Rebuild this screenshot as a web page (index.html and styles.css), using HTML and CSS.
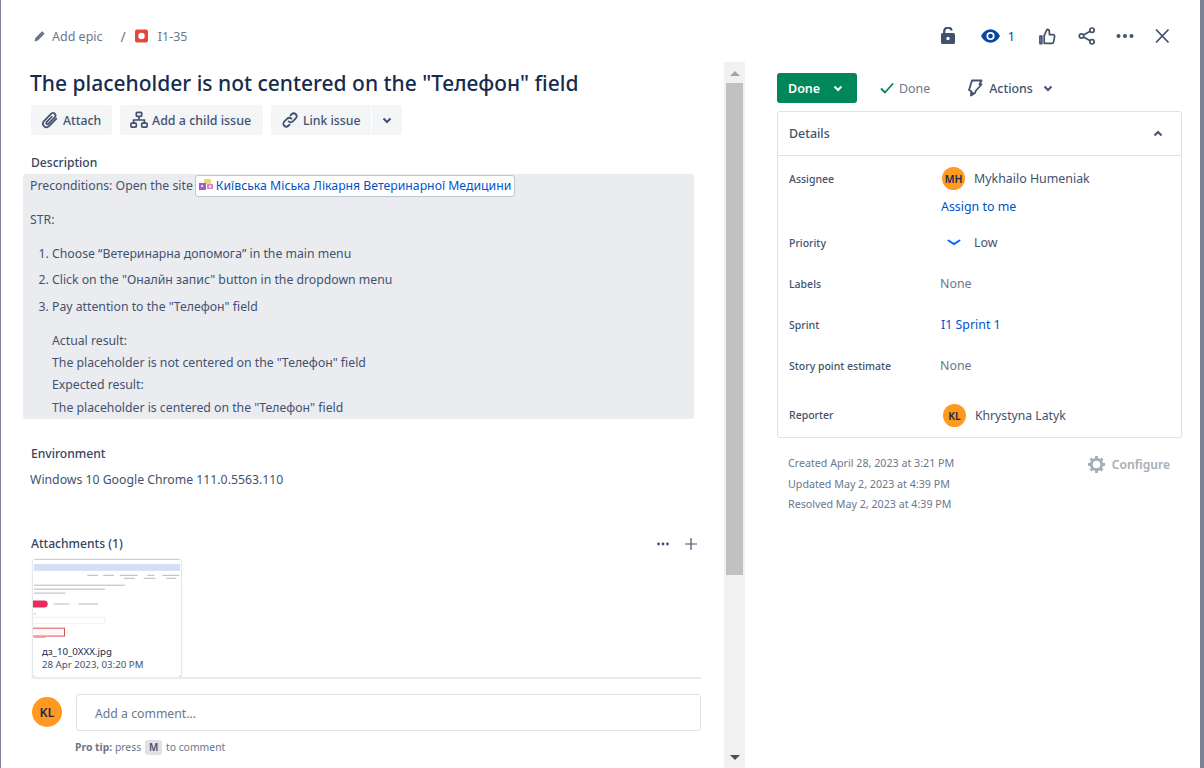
FILE: index.html
```html
<!DOCTYPE html>
<html lang="en">
<head>
<meta charset="utf-8">
<title>I1-35</title>
<link rel="stylesheet" href="styles.css">
</head>
<body>
<div class="modal">
  <header class="topbar">
    <nav class="crumbs">
      <svg class="ic-pencil" width="14" height="14" viewBox="0 0 14 14"><path fill="#6b778c" d="M1.500 12.500l.8-3.400 6-6.200c.5-.5 1.200-.5 1.700 0l.9.900c.5.5.5 1.200 0 1.700l-6 6.100z"/></svg>
      <span class="crumb-text">Add epic</span>
      <span class="crumb-sep">/</span>
      <svg class="ic-bug" width="14" height="14" viewBox="0 0 14 14"><rect width="13" height="13" y=".5" rx="2" fill="#e5493a"/><circle cx="6.500" cy="7" r="3.200" fill="#fff"/></svg>
      <span class="crumb-key">I1-35</span>
    </nav>
    <div class="top-actions">
      <svg class="ta ta-lock" width="14" height="17" viewBox="0 0 14 17"><path fill="none" stroke="#42526e" stroke-width="2.200" d="M3.200 7V4.500a3.800 3.800 0 0 1 7.500-.9"/><rect x="0" y="6" width="14" height="11" rx="1.500" fill="#42526e"/><circle cx="7" cy="11.500" r="1.700" fill="#fff"/></svg>
      <span class="watch">
        <svg width="19" height="14" viewBox="0 0 20 14"><path fill="#0747a6" d="M0 7C2.500 2.300 6 0 10 0s7.500 2.300 10 7c-2.500 4.700-6 7-10 7S2.500 11.700 0 7z"/><circle cx="10" cy="7" r="4.300" fill="#fff"/><circle cx="10" cy="7" r="2.500" fill="#0747a6"/></svg>
        <span class="watch-n">1</span>
      </span>
      <svg class="ta ta-thumb" width="17" height="17" viewBox="0 0 18 18"><path fill="none" stroke="#42526e" stroke-width="1.800" stroke-linejoin="round" d="M5.500 8l3-6.500c1.500 0 2.500 1 2.500 2.500v3h4c1 0 1.700.8 1.500 1.800l-1 6c-.2.900-.8 1.400-1.700 1.400H5.500zM1 8.500h2V16.500H1z"/></svg>
      <svg class="ta ta-share" width="18" height="18" viewBox="0 0 18 18"><g fill="none" stroke="#42526e" stroke-width="1.700"><circle cx="3.500" cy="9" r="2.200"/><circle cx="14" cy="3.200" r="2.200"/><circle cx="14" cy="14.800" r="2.200"/><path d="M5.500 8l6.600-3.700M5.500 10l6.600 3.700"/></g></svg>
      <svg class="ta ta-more" width="18" height="6" viewBox="0 0 18 6"><circle cx="2.500" cy="3" r="2" fill="#42526e"/><circle cx="9" cy="3" r="2" fill="#42526e"/><circle cx="15.500" cy="3" r="2" fill="#42526e"/></svg>
      <svg class="ta ta-close" width="16" height="16" viewBox="0 0 16 16"><path stroke="#42526e" stroke-width="1.800" d="M2 1.500l12.500 13M14.500 1.500L2 14.500"/></svg>
    </div>
  </header>

  <div class="columns">
    <main class="main">
      <div class="content">
        <h1 class="title">The placeholder is not centered on the "Телефон" field</h1>
        <div class="btn-row">
          <button class="btn btn-attach">
            <svg width="20" height="20" viewBox="0 0 22 22"><path fill="none" stroke="#42526e" stroke-width="1.900" stroke-linecap="round" d="M18 9.500l-7.800 8c-1.800 1.800-4.200 1.800-5.800.2s-1.500-4 .2-5.800l7.500-7.700c1.200-1.200 3-1.200 4.100-.1s1.100 2.900 0 4.100l-7 7.100c-.6.600-1.500.6-2 .1s-.5-1.400 0-2l5.800-6"/></svg>Attach
          </button>
          <button class="btn btn-child">
            <svg width="18" height="18" viewBox="0 0 20 20"><g fill="none" stroke="#42526e" stroke-width="1.900"><rect x="7" y="1.500" width="6" height="4.500" rx="1"/><rect x="1" y="13.500" width="6" height="4.500" rx="1"/><rect x="13" y="13.500" width="6" height="4.500" rx="1"/><path d="M10 6v4M4 13.500V10h12v3.500"/></g></svg>Add a child issue
          </button>
          <div class="btn-group">
            <button class="btn btn-link">
              <svg width="18" height="18" viewBox="0 0 20 20"><g fill="none" stroke="#42526e" stroke-width="2" stroke-linecap="round"><path d="M8.500 11.500a3.200 3.200 0 0 0 4.600 0l3.300-3.300a3.200 3.200 0 0 0-4.600-4.600l-1.300 1.300"/><path d="M11.500 8.500a3.200 3.200 0 0 0-4.600 0l-3.300 3.300a3.200 3.200 0 0 0 4.600 4.600l1.300-1.300"/></g></svg>Link issue
            </button>
            <button class="btn btn-caret">
              <svg width="10" height="7" viewBox="0 0 10 7"><path fill="none" stroke="#42526e" stroke-width="2" d="M1.500 1.500L5 5l3.500-3.500"/></svg>
            </button>
          </div>
        </div>

        <h2 class="section-label label-desc">Description</h2>
        <div class="desc">
          <p class="desc-first">Preconditions: Open the site <a class="smart-link"><svg width="14" height="14" viewBox="0 0 14 14"><rect x="5" y="0" width="7" height="5" fill="#e8d96a"/><rect x="0" y="4" width="7" height="7" fill="#a05fc8"/><rect x="8" y="5" width="6" height="5" fill="#d483c4"/><rect x="2" y="6" width="2" height="2" fill="#e9d7f2"/><rect x="10" y="6.500" width="2" height="2" fill="#fff"/></svg> Київська Міська Лікарня Ветеринарної Медицини</a></p>
          <p class="desc-str">STR:</p>
          <ol class="steps">
            <li>Choose “Ветеринарна допомога” in the main menu</li>
            <li>Click on the "Оналйн запис" button in the dropdown menu</li>
            <li>Pay attention to the "Телефон" field</li>
          </ol>
          <div class="results">
            <p>Actual result:</p>
            <p>The placeholder is not centered on the "Телефон" field</p>
            <p>Expected result:</p>
            <p>The placeholder is centered on the "Телефон" field</p>
          </div>
        </div>

        <h2 class="section-label label-env">Environment</h2>
        <p class="env">Windows 10 Google Chrome 111.0.5563.110</p>

        <div class="att-head">
          <h2 class="section-label">Attachments (1)</h2>
          <div class="att-tools">
            <svg width="12" height="4" viewBox="0 0 12 4"><circle cx="1.500" cy="2" r="1.400" fill="#42526e"/><circle cx="6" cy="2" r="1.400" fill="#42526e"/><circle cx="10.500" cy="2" r="1.400" fill="#42526e"/></svg>
            <svg width="12" height="12" viewBox="0 0 12 12"><path stroke="#42526e" stroke-width="1.200" d="M6 0v12M0 6h12"/></svg>
          </div>
        </div>
        <div class="att-card">
          <svg class="thumb" width="148" height="83" viewBox="0 0 148 83">
            <rect width="148" height="83" fill="#fff"/>
            <rect y="4" width="148" height="7" fill="#d3dff5"/>
            <g fill="#9fa3a8" opacity=".75">
              <rect x="54" y="15" width="11" height="1"/><rect x="70" y="15" width="11" height="1"/><rect x="87" y="15" width="18" height="1"/><rect x="91" y="18" width="11" height="1"/><rect x="115" y="15" width="7" height="1"/><rect x="111" y="18" width="12" height="1"/><rect x="130" y="15" width="17" height="1"/><rect x="134" y="18" width="10" height="1"/>
              <rect y="25" width="92" height="1"/><rect y="29" width="72" height="1"/><rect y="33" width="32" height="1"/>
              <rect x="20" y="44" width="16" height="1"/><rect x="45" y="44" width="20" height="1"/><rect y="54" width="2" height="1"/><rect y="78" width="12" height="1"/>
            </g>
            <rect x="-8" y="41" width="22" height="7" rx="3.500" fill="#e62e5c"/>
            <rect x="-2" y="58" width="74" height="6" rx="2" fill="none" stroke="#eeeeee"/>
            <rect x="-2" y="69" width="33" height="8" fill="#fdf7f7" stroke="#d9534f"/>
          </svg>
          <p class="att-name">дз_10_0XXX.jpg</p>
          <p class="att-date">28 Apr 2023, 03:20 PM</p>
        </div>
        <div class="comment-rule"></div>
        <div class="comment">
          <span class="avatar avatar-lg">KL</span>
          <div class="comment-body">
            <div class="comment-input">Add a comment...</div>
            <p class="tip"><b>Pro tip:</b> press <kbd>M</kbd> to comment</p>
          </div>
        </div>
      </div>
      <div class="scrollbar">
        <span class="arrow-up"></span>
        <div class="thumbbar"></div>
        <span class="arrow-down"></span>
      </div>
    </main>

    <aside class="side">
      <div class="status-row">
        <button class="status-btn">Done<svg width="10" height="7" viewBox="0 0 10 7"><path fill="none" stroke="#fff" stroke-width="2" d="M1.500 1.500L5 5l3.500-3.500"/></svg></button>
        <span class="resolution"><svg width="14" height="12" viewBox="0 0 14 12"><path fill="none" stroke="#00875a" stroke-width="1.800" d="M1 6.500L5 10.500 13 1.500"/></svg>Done</span>
        <span class="actions"><svg width="16" height="18" viewBox="0 0 16 18"><path fill="none" stroke="#42526e" stroke-width="1.800" stroke-linejoin="round" d="M5 1.500h9.500l-2 4h2L9 11.500 8 14 4 16.500 4.500 12.500 2 11z"/><path fill="#42526e" d="M3.500 13h3l-.5 2.500-2.500 1.500z"/></svg>Actions<svg class="act-caret" width="10" height="7" viewBox="0 0 10 7"><path fill="none" stroke="#42526e" stroke-width="2" d="M1.500 1.500L5 5l3.500-3.500"/></svg></span>
      </div>

      <section class="details">
        <div class="details-head">
          <span>Details</span>
          <svg width="10" height="7" viewBox="0 0 10 7"><path fill="none" stroke="#42526e" stroke-width="2" d="M1.500 5.500L5 2l3.500 3.500"/></svg>
        </div>
        <div class="details-body">
          <div class="row row-assignee">
            <span class="row-label">Assignee</span>
            <div class="row-val">
              <div class="person"><span class="avatar">MH</span>Mykhailo Humeniak</div>
              <a class="assign">Assign to me</a>
            </div>
          </div>
          <div class="row row-priority">
            <span class="row-label">Priority</span>
            <div class="row-val priority"><svg width="14" height="8" viewBox="0 0 14 8"><path fill="none" stroke="#0065ff" stroke-width="2" stroke-linecap="round" d="M1.500 1.500L7 5l5.500-3.500"/></svg>Low</div>
          </div>
          <div class="row row-labels">
            <span class="row-label">Labels</span>
            <div class="row-val none">None</div>
          </div>
          <div class="row row-sprint">
            <span class="row-label">Sprint</span>
            <a class="row-val sprint">I1 Sprint 1</a>
          </div>
          <div class="row row-points">
            <span class="row-label">Story point estimate</span>
            <div class="row-val none">None</div>
          </div>
          <div class="row row-reporter">
            <span class="row-label">Reporter</span>
            <div class="row-val"><div class="person person-rep"><span class="avatar">KL</span>Khrystyna Latyk</div></div>
          </div>
        </div>
      </section>

      <div class="meta">
        <div class="dates">
          <p>Created April 28, 2023 at 3:21 PM</p>
          <p>Updated May 2, 2023 at 4:39 PM</p>
          <p>Resolved May 2, 2023 at 4:39 PM</p>
        </div>
        <span class="configure"><svg width="17" height="17" viewBox="0 0 18 18"><circle cx="9" cy="9" r="5.500" fill="none" stroke="#a5adba" stroke-width="3"/><path stroke="#a5adba" stroke-width="3" d="M9 0v3.500M9 14.500V18M0 9h3.500M14.500 9H18M2.700 2.700l2.400 2.400M12.900 12.900l2.400 2.400M2.700 15.300l2.400-2.400M12.900 5.100l2.400-2.400"/></svg>Configure</span>
      </div>
    </aside>
  </div>
</div>
</body>
</html>
```
FILE: styles.css
```css
* { box-sizing: border-box; }
html, body { margin: 0; padding: 0; height: 768px; overflow: hidden; }
body {
  background: #7a8294;
  font-family: "Noto Sans", sans-serif;
  font-size: 12.250px;
  color: #172b4d;
  padding-left: 1px;
  padding-right: 4px;
}
p, h1, h2, ol { margin: 0; padding: 0; }
.modal { background: #fff; height: 768px; display: flex; flex-direction: column; }

.topbar { height: 62px; flex: none; display: flex; justify-content: space-between; align-items: center; padding: 10px 30px 0 32px; }
.crumbs { display: flex; align-items: center; color: #6b778c; font-size: 12.500px; }
.crumb-text { margin-left: 5px; }
.crumb-sep { margin: 0 9px 0 18px; font-size: 14px; }
.crumb-key { margin-left: 9px; }
.top-actions { display: flex; align-items: center; }
.ta { display: block; }
.ta-lock { margin-right: 26px; margin-top: -1px; }
.watch { display: flex; align-items: center; margin-right: 24px; }
.watch-n { margin-left: 8px; color: #0747a6; font-size: 12.500px; }
.ta-thumb { margin-right: 22px; }
.ta-share { margin-right: 20px; }
.ta-more { margin-right: 20px; }

.columns { flex: 1; min-height: 0; display: flex; }
.main { width: 744px; flex: none; display: flex; }
.content { width: 723px; flex: none; padding-left: 29px; padding-right: 23px; height: 706px; overflow: hidden; }

.title { font-size: 21px; font-weight: 500; line-height: 30px; margin-top: 6px; color: #172b4d; }
.btn-row { display: flex; gap: 8px; margin: 7px 0 0 1px; }
.btn { height: 30px; border: 0; background: #f4f5f7; color: #42526e; font: 500 12.250px "Noto Sans", sans-serif; display: flex; align-items: center; gap: 4px; border-radius: 3px; padding: 0 0 0 10px; white-space: nowrap; }
.btn-attach { width: 81px; padding-left: 9px; gap: 3px; }
.btn-child { width: 143px; font-size: 12.450px; }
.btn-group { display: flex; gap: 1px; }
.btn-link { width: 100px; border-radius: 3px 0 0 3px; }
.btn-caret { width: 30px; border-radius: 0 3px 3px 0; padding: 0 10px; }

.section-label { font-size: 12.100px; font-weight: 500; color: #344563; line-height: 18px; margin-left: 1px; }
.label-desc { margin-top: 19px; }
.desc { margin: 2px 7px 0 -7px; padding: 0 7px; height: 245px; background: #ebecf0; border-radius: 3px; color: #42526e; line-height: 22px; }
.desc-first { display: flex; align-items: center; height: 23px; white-space: nowrap; }
.smart-link { display: flex; align-items: center; gap: 3px; height: 22px; margin-left: 2px; padding: 0 3px; background: #fff; border: 1px solid #c1c7d0; border-radius: 3px; color: #0052cc; }
.desc-str { margin-top: 13px; line-height: 20px; }
.steps { margin-top: 14px; padding-left: 22px; }
.steps li { line-height: 20px; margin-bottom: 6.400px; padding-left: 0; }
.results { margin-top: 13px; padding-left: 22px; }
.results p { line-height: 22.300px; }

.label-env { margin-top: 26px; }
.env { margin-top: 8px; color: #42526e; line-height: 18px; }

.att-head { display: flex; justify-content: space-between; align-items: center; margin-top: 46px; padding-right: 4px; }
.att-tools { display: flex; align-items: center; gap: 16px; }
.att-card { width: 148px; height: 118px; margin: 6px 0 0 3px; border-radius: 3px; box-shadow: 0 1px 2px rgba(9,30,66,.32), 0 0 1px rgba(9,30,66,.2); overflow: hidden; }
.thumb { display: block; border-top: 1px solid #ccd; }
.att-name { margin: 0 0 0 9px; font-size: 9.700px; line-height: 13px; color: #172b4d; padding-top: 3px; box-sizing: content-box; }
.att-date { margin: 0 0 0 9px; font-size: 9.700px; line-height: 13px; color: #42526e; }
.comment-rule { height: 2px; background: #ebecf0; margin: 0 0 0 1px; }
.comment { display: flex; margin-top: 15px; margin-left: 2px; gap: 14px; }
.avatar { width: 23px; height: 23px; flex: none; border-radius: 50%; background: #ff991f; color: #172b4d; display: inline-flex; align-items: center; justify-content: center; font-size: 10.500px; font-weight: 600; }
.avatar-lg { width: 30px; height: 30px; font-size: 12.500px; margin-top: 3px; }
.comment-body { flex: 1; }
.comment-input { height: 37px; border: 1px solid #dfe1e6; border-radius: 3px; padding-left: 18px; line-height: 37px; color: #6b778c; }
.tip { margin: 8px 0 0 -1px; font-size: 10.400px; line-height: 16px; color: #6b778c; }
.tip kbd { display: inline-block; font: 600 10px "Noto Sans", sans-serif; background: #dfe1e6; color: #42526e; padding: 0 4px; border-radius: 3px; margin: 0 1px; line-height: 15px; }

.scrollbar { width: 21px; height: 706px; background: #f1f1f1; display: flex; flex-direction: column; align-items: center; }
.thumbbar { width: 17px; height: 492px; background: #c1c1c1; margin-top: 7px; }
.arrow-up { margin-top: 9px; width: 0; height: 0; border: 5px solid transparent; border-top: 0; border-bottom: 5px solid #a3a3a3; }
.arrow-down { margin-top: auto; margin-bottom: 8px; width: 0; height: 0; border: 5px solid transparent; border-bottom: 0; border-top: 5px solid #505050; }

.side { flex: 1; padding: 11px 18px 0 32px; font-size: 12.400px; }
.status-row { display: flex; align-items: center; height: 30px; }
.status-btn { width: 80px; height: 30px; background: #00875a; color: #fff; border: 0; border-radius: 3px; font: 600 12.500px "Noto Sans", sans-serif; display: flex; align-items: center; gap: 13px; padding: 0 0 0 11px; }
.resolution { display: flex; align-items: center; gap: 5px; margin-left: 23px; color: #6b778c; }
.actions { display: flex; align-items: center; gap: 6px; margin-left: 37px; color: #42526e; font-weight: 500; }
.act-caret { margin-left: 4px; }

.details { margin-top: 8px; border: 1px solid #dfe1e6; border-radius: 3px; height: 327px; }
.details-head { height: 44px; border-bottom: 1px solid #dfe1e6; display: flex; justify-content: space-between; align-items: center; padding: 0 18px 0 11px; color: #42526e; font-weight: 500; }
.details-body { padding: 0 11px; }
.row { display: flex; }
.row-label { width: 152px; flex: none; font-size: 10.500px; font-weight: 500; color: #42526e; line-height: 18px; }
.row-val { color: #42526e; line-height: 18px; }
.row-assignee { margin-top: 11px; }
.row-assignee .row-label { margin-top: 3px; }
.person { display: flex; align-items: center; gap: 10px; }
.row-assignee .avatar { margin-left: 1px; }
.row-assignee .person { gap: 9px; }
.assign { display: block; color: #0052cc; margin-top: 8px; line-height: 18px; }
.row-priority { margin-top: 17px; }
.row-priority .row-label { margin-top: 1px; }
.priority { display: flex; align-items: center; gap: 13px; padding-left: 6px; }
.row-labels { margin-top: 23px; }
.row-sprint { margin-top: 23px; }
.sprint { color: #0052cc; }
.row-points { margin-top: 23px; }
.none { color: #6b778c; margin-left: -1px; }
.row-reporter { margin-top: 29px; }
.row-reporter .row-label { margin-top: 2px; }
.person-rep { margin-left: 2px; gap: 9px; font-size: 12.200px; }

.meta { display: flex; justify-content: space-between; padding: 15px 12px 0 10px; }
.dates { padding-left: 1px; }
.dates p { font-size: 10.700px; color: #6b778c; line-height: 20.500px; }
.configure { display: flex; align-items: center; gap: 7px; height: 22px; color: #a5adba; font-weight: 600; font-size: 12.100px; }
```
